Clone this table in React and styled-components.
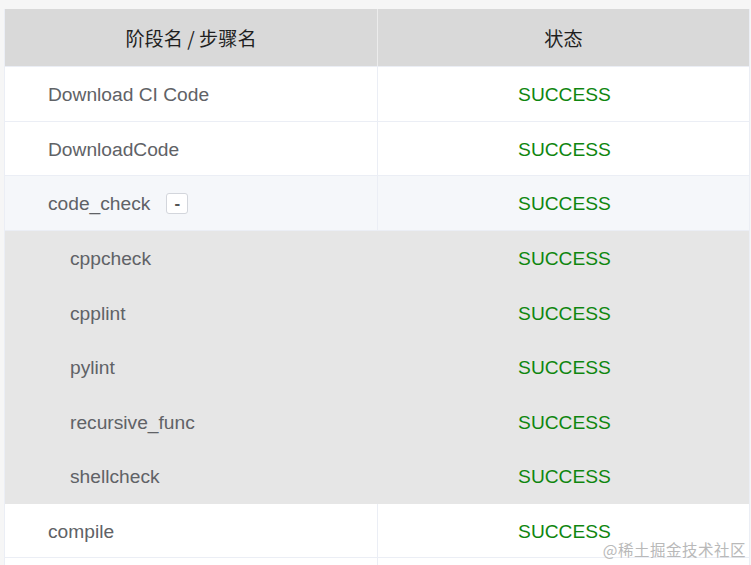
import React from "react";
import styled, { createGlobalStyle } from "styled-components";

const GlobalStyle = createGlobalStyle`
  html, body {
    margin: 0;
    padding: 0;
    background: #f6f6f6;
    overflow: hidden;
  }
`;

const Page = styled.div`
  position: relative;
  width: 751px;
  height: 565px;
  padding: 9px 0 0 4px;
  box-sizing: border-box;
  overflow: hidden;
`;

const Table = styled.div`
  width: 746px;
  background: #fff;
  border-left: 1px solid #ebeef5;
  border-right: 1px solid #ebeef5;
  box-sizing: border-box;
  font-family: "Liberation Sans", Arial, sans-serif;
`;

const Row = styled.div`
  display: grid;
  grid-template-columns: 373px 1fr;
  height: ${(p) => (p.$header ? "58px" : "54.6px")};
  box-sizing: border-box;
  border-bottom: 1px solid ${(p) => (p.$child ? "#e6e6e6" : "#ebeef5")};
  background: ${(p) =>
    p.$header ? "#d9d9d9" : p.$child ? "#e6e6e6" : p.$expanded ? "#f5f7fa" : "#fff"};
`;

const Cell = styled.div`
  display: flex;
  align-items: center;
  justify-content: ${(p) => (p.$center ? "center" : "flex-start")};
  padding-left: ${(p) => (p.$center ? 0 : p.$indent ? "65px" : "43px")};
  padding-top: 3px;
  box-sizing: border-box;
  border-right: ${(p) => (p.$divider ? "1px solid #ebeef5" : "none")};
  font-size: 19.2px;
  color: #606266;
  white-space: nowrap;
`;

const HeadCell = styled(Cell)`
  padding-top: 0;
  font-family: "Noto Sans CJK SC", "Liberation Sans", sans-serif;
  color: #1f1f1f;
  border-right-color: #ececec;
`;

const Status = styled.span`
  color: #0f860f;
  padding-left: 2px;
`;

const ToggleButton = styled.span`
  display: inline-flex;
  align-items: center;
  justify-content: center;
  width: 22px;
  height: 21px;
  margin-left: 16px;
  margin-top: -2px;
  border: 1px solid #d3d6dc;
  border-radius: 3px;
  background: #fff;
  box-sizing: border-box;
  font-size: 17px;
  font-weight: bold;
  color: #555;
  line-height: 1;
`;

const Watermark = styled.div`
  position: absolute;
  right: 5px;
  bottom: 5px;
  font-family: "Noto Sans CJK SC", sans-serif;
  font-size: 15.5px;
  color: #b9b9b9;
  letter-spacing: 0.5px;
`;

const rows = [
  { name: "Download CI Code", status: "SUCCESS" },
  { name: "DownloadCode", status: "SUCCESS" },
  { name: "code_check", status: "SUCCESS", expanded: true },
  { name: "cppcheck", status: "SUCCESS", child: true },
  { name: "cpplint", status: "SUCCESS", child: true },
  { name: "pylint", status: "SUCCESS", child: true },
  { name: "recursive_func", status: "SUCCESS", child: true },
  { name: "shellcheck", status: "SUCCESS", child: true },
  { name: "compile", status: "SUCCESS" },
  { name: "", status: "" },
];

export default function App() {
  return (
    <>
      <GlobalStyle />
      <Page>
        <Table>
          <Row $header>
            <HeadCell $center $divider>阶段名 / 步骤名</HeadCell>
            <HeadCell $center>状态</HeadCell>
          </Row>
          {rows.map((r, i) => (
            <Row key={i} $child={r.child} $expanded={r.expanded}>
              <Cell $indent={r.child} $divider={!r.child}>
                {r.name}
                {r.expanded && <ToggleButton>-</ToggleButton>}
              </Cell>
              <Cell $center>
                <Status>{r.status}</Status>
              </Cell>
            </Row>
          ))}
        </Table>
        <Watermark>@稀土掘金技术社区</Watermark>
      </Page>
    </>
  );
}
